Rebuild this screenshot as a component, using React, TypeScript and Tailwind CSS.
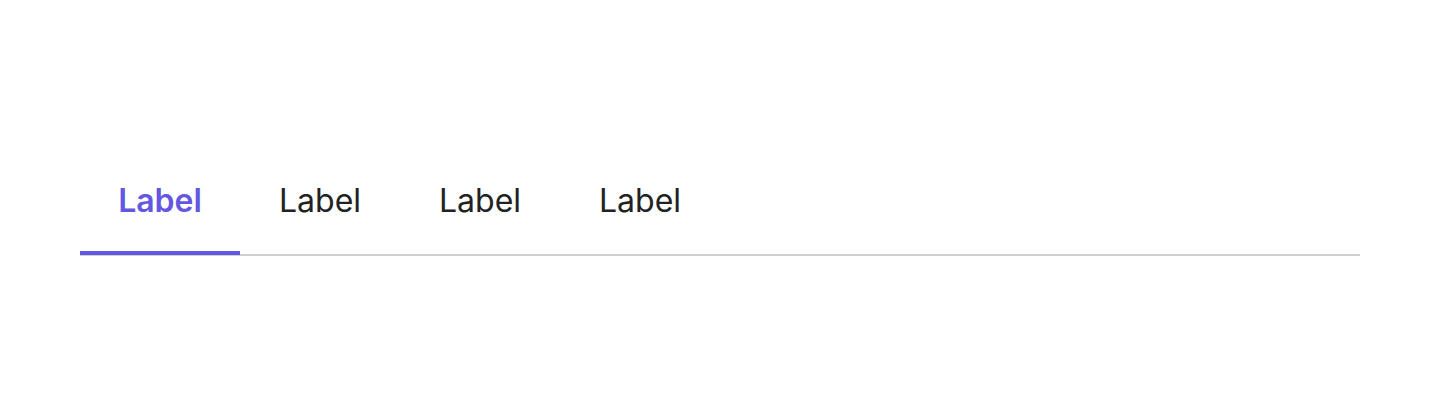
import { useState } from 'react';

const tabs = ['Label', 'Label', 'Label', 'Label'];

const App = () => {
  const [active, setActive] = useState(0);

  return (
    <div className="h-[416px] bg-white px-20 pt-[181px]" style={{ fontFamily: 'Inter, "Noto Sans", sans-serif' }}>
      <div className="flex border-b-2 border-[#cfcfcf]">
        {tabs.map((label, i) => (
          <button
            key={i}
            onClick={() => setActive(i)}
            className={`relative w-40 pb-[33px] text-[32px] leading-10 ${
              active === i ? 'font-semibold text-[#6357e2]' : 'text-[#222222]'
            }`}
          >
            {label}
            {active === i && <span className="absolute inset-x-0 -bottom-px h-1 bg-[#6357e2]" />}
          </button>
        ))}
      </div>
    </div>
  );
};

export default App;
